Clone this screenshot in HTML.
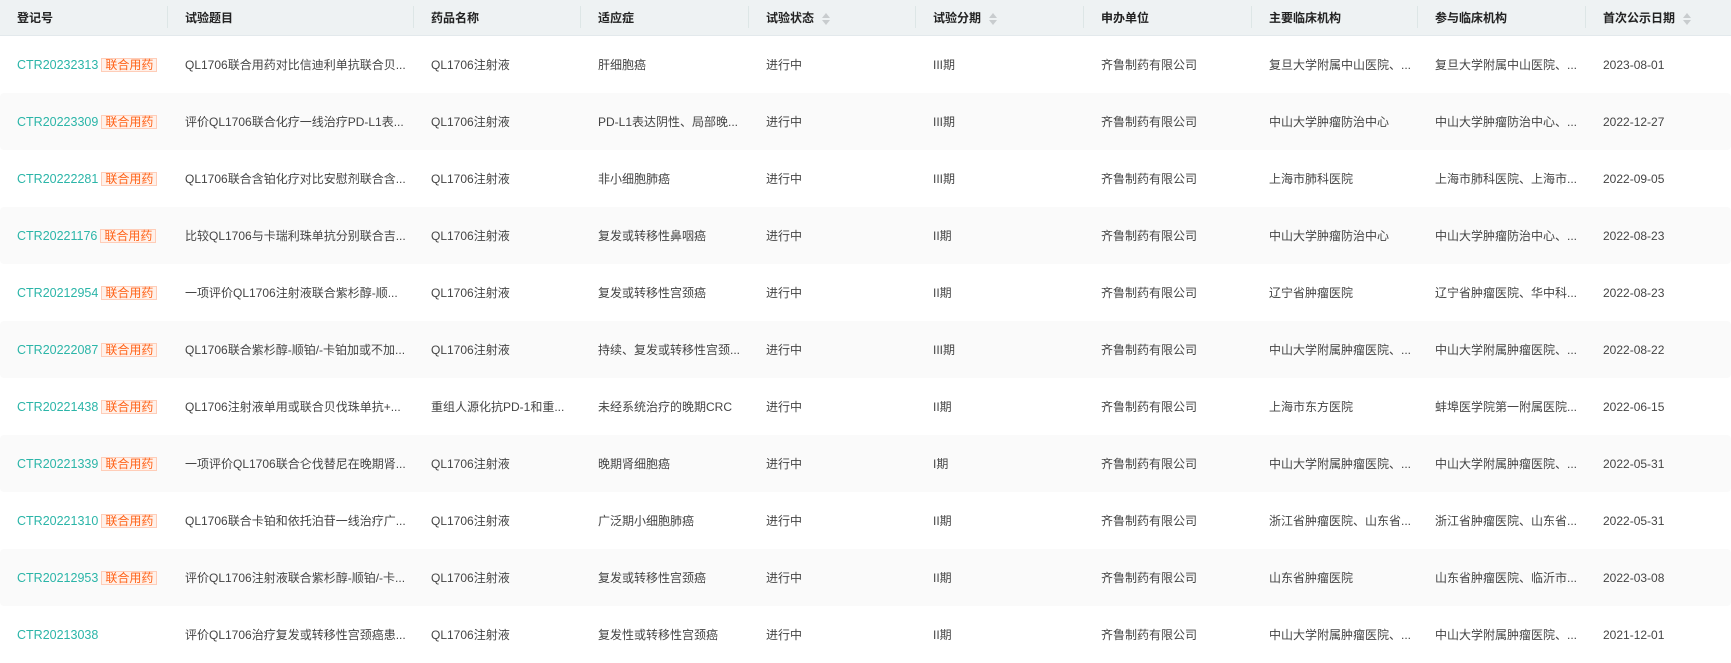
<!DOCTYPE html>
<html><head><meta charset="utf-8"><style>
*{margin:0;padding:0;box-sizing:border-box}
body{width:1731px;height:654px;overflow:hidden;background:#fff;font-family:"Liberation Sans","Noto Sans CJK SC",sans-serif;font-size:12px;color:#444}
table{border-collapse:separate;border-spacing:0;table-layout:fixed;width:1731px}
th{height:36px;background:#eef2f3;font-weight:bold;color:#222;text-align:left;padding-left:18px;position:relative;font-size:12px;border-bottom:1px solid #e3e9ec}
th:not(:first-child)::before{content:"";position:absolute;left:0;top:6px;height:22px;width:1px;background:#dde6e6}
td{height:57px;padding-left:18px;white-space:nowrap;overflow:hidden}
tr.g td{background:#fafafa}
tr.g td:first-child{border-radius:4px 0 0 4px}
tr.g td:last-child{border-radius:0 4px 4px 0}
td:first-child,th:first-child{padding-left:17px}
.id{color:#2bb5a8;font-size:12.5px;vertical-align:middle}
.b{display:inline-block;margin-left:3px;padding:0 3px;height:14px;line-height:12px;border:1px solid #ffcdb8;background:#fff1ea;color:#ff6319;font-size:12px;vertical-align:middle}
.s{display:inline-block;vertical-align:middle;margin-left:8px;width:8px;height:12px;position:relative}
.s::before,.s::after{content:"";position:absolute;left:0;border-left:4px solid transparent;border-right:4px solid transparent}
.s::before{top:0;border-bottom:5px solid #c8ccce}
.s::after{bottom:0;border-top:5px solid #c8ccce}
</style></head><body>
<table>
<colgroup><col style="width:167px"><col style="width:246px"><col style="width:167px"><col style="width:168px"><col style="width:167px"><col style="width:168px"><col style="width:168px"><col style="width:166px"><col style="width:168px"><col style="width:146px"></colgroup>
<tr><th>登记号</th><th>试验题目</th><th>药品名称</th><th>适应症</th><th>试验状态<span class="s"></span></th><th>试验分期<span class="s"></span></th><th>申办单位</th><th>主要临床机构</th><th>参与临床机构</th><th>首次公示日期<span class="s"></span></th></tr>
<tr><td><span class="id">CTR20232313</span><span class="b">联合用药</span></td><td>QL1706联合用药对比信迪利单抗联合贝...</td><td>QL1706注射液</td><td>肝细胞癌</td><td>进行中</td><td>III期</td><td>齐鲁制药有限公司</td><td>复旦大学附属中山医院、...</td><td>复旦大学附属中山医院、...</td><td>2023-08-01</td></tr>
<tr class="g"><td><span class="id">CTR20223309</span><span class="b">联合用药</span></td><td>评价QL1706联合化疗一线治疗PD-L1表...</td><td>QL1706注射液</td><td>PD-L1表达阴性、局部晚...</td><td>进行中</td><td>III期</td><td>齐鲁制药有限公司</td><td>中山大学肿瘤防治中心</td><td>中山大学肿瘤防治中心、...</td><td>2022-12-27</td></tr>
<tr><td><span class="id">CTR20222281</span><span class="b">联合用药</span></td><td>QL1706联合含铂化疗对比安慰剂联合含...</td><td>QL1706注射液</td><td>非小细胞肺癌</td><td>进行中</td><td>III期</td><td>齐鲁制药有限公司</td><td>上海市肺科医院</td><td>上海市肺科医院、上海市...</td><td>2022-09-05</td></tr>
<tr class="g"><td><span class="id">CTR20221176</span><span class="b">联合用药</span></td><td>比较QL1706与卡瑞利珠单抗分别联合吉...</td><td>QL1706注射液</td><td>复发或转移性鼻咽癌</td><td>进行中</td><td>II期</td><td>齐鲁制药有限公司</td><td>中山大学肿瘤防治中心</td><td>中山大学肿瘤防治中心、...</td><td>2022-08-23</td></tr>
<tr><td><span class="id">CTR20212954</span><span class="b">联合用药</span></td><td>一项评价QL1706注射液联合紫杉醇-顺...</td><td>QL1706注射液</td><td>复发或转移性宫颈癌</td><td>进行中</td><td>II期</td><td>齐鲁制药有限公司</td><td>辽宁省肿瘤医院</td><td>辽宁省肿瘤医院、华中科...</td><td>2022-08-23</td></tr>
<tr class="g"><td><span class="id">CTR20222087</span><span class="b">联合用药</span></td><td>QL1706联合紫杉醇-顺铂/-卡铂加或不加...</td><td>QL1706注射液</td><td>持续、复发或转移性宫颈...</td><td>进行中</td><td>III期</td><td>齐鲁制药有限公司</td><td>中山大学附属肿瘤医院、...</td><td>中山大学附属肿瘤医院、...</td><td>2022-08-22</td></tr>
<tr><td><span class="id">CTR20221438</span><span class="b">联合用药</span></td><td>QL1706注射液单用或联合贝伐珠单抗+...</td><td>重组人源化抗PD-1和重...</td><td>未经系统治疗的晚期CRC</td><td>进行中</td><td>II期</td><td>齐鲁制药有限公司</td><td>上海市东方医院</td><td>蚌埠医学院第一附属医院...</td><td>2022-06-15</td></tr>
<tr class="g"><td><span class="id">CTR20221339</span><span class="b">联合用药</span></td><td>一项评价QL1706联合仑伐替尼在晚期肾...</td><td>QL1706注射液</td><td>晚期肾细胞癌</td><td>进行中</td><td>I期</td><td>齐鲁制药有限公司</td><td>中山大学附属肿瘤医院、...</td><td>中山大学附属肿瘤医院、...</td><td>2022-05-31</td></tr>
<tr><td><span class="id">CTR20221310</span><span class="b">联合用药</span></td><td>QL1706联合卡铂和依托泊苷一线治疗广...</td><td>QL1706注射液</td><td>广泛期小细胞肺癌</td><td>进行中</td><td>II期</td><td>齐鲁制药有限公司</td><td>浙江省肿瘤医院、山东省...</td><td>浙江省肿瘤医院、山东省...</td><td>2022-05-31</td></tr>
<tr class="g"><td><span class="id">CTR20212953</span><span class="b">联合用药</span></td><td>评价QL1706注射液联合紫杉醇-顺铂/-卡...</td><td>QL1706注射液</td><td>复发或转移性宫颈癌</td><td>进行中</td><td>II期</td><td>齐鲁制药有限公司</td><td>山东省肿瘤医院</td><td>山东省肿瘤医院、临沂市...</td><td>2022-03-08</td></tr>
<tr><td><span class="id">CTR20213038</span></td><td>评价QL1706治疗复发或转移性宫颈癌患...</td><td>QL1706注射液</td><td>复发性或转移性宫颈癌</td><td>进行中</td><td>II期</td><td>齐鲁制药有限公司</td><td>中山大学附属肿瘤医院、...</td><td>中山大学附属肿瘤医院、...</td><td>2021-12-01</td></tr>
</table>
</body></html>
